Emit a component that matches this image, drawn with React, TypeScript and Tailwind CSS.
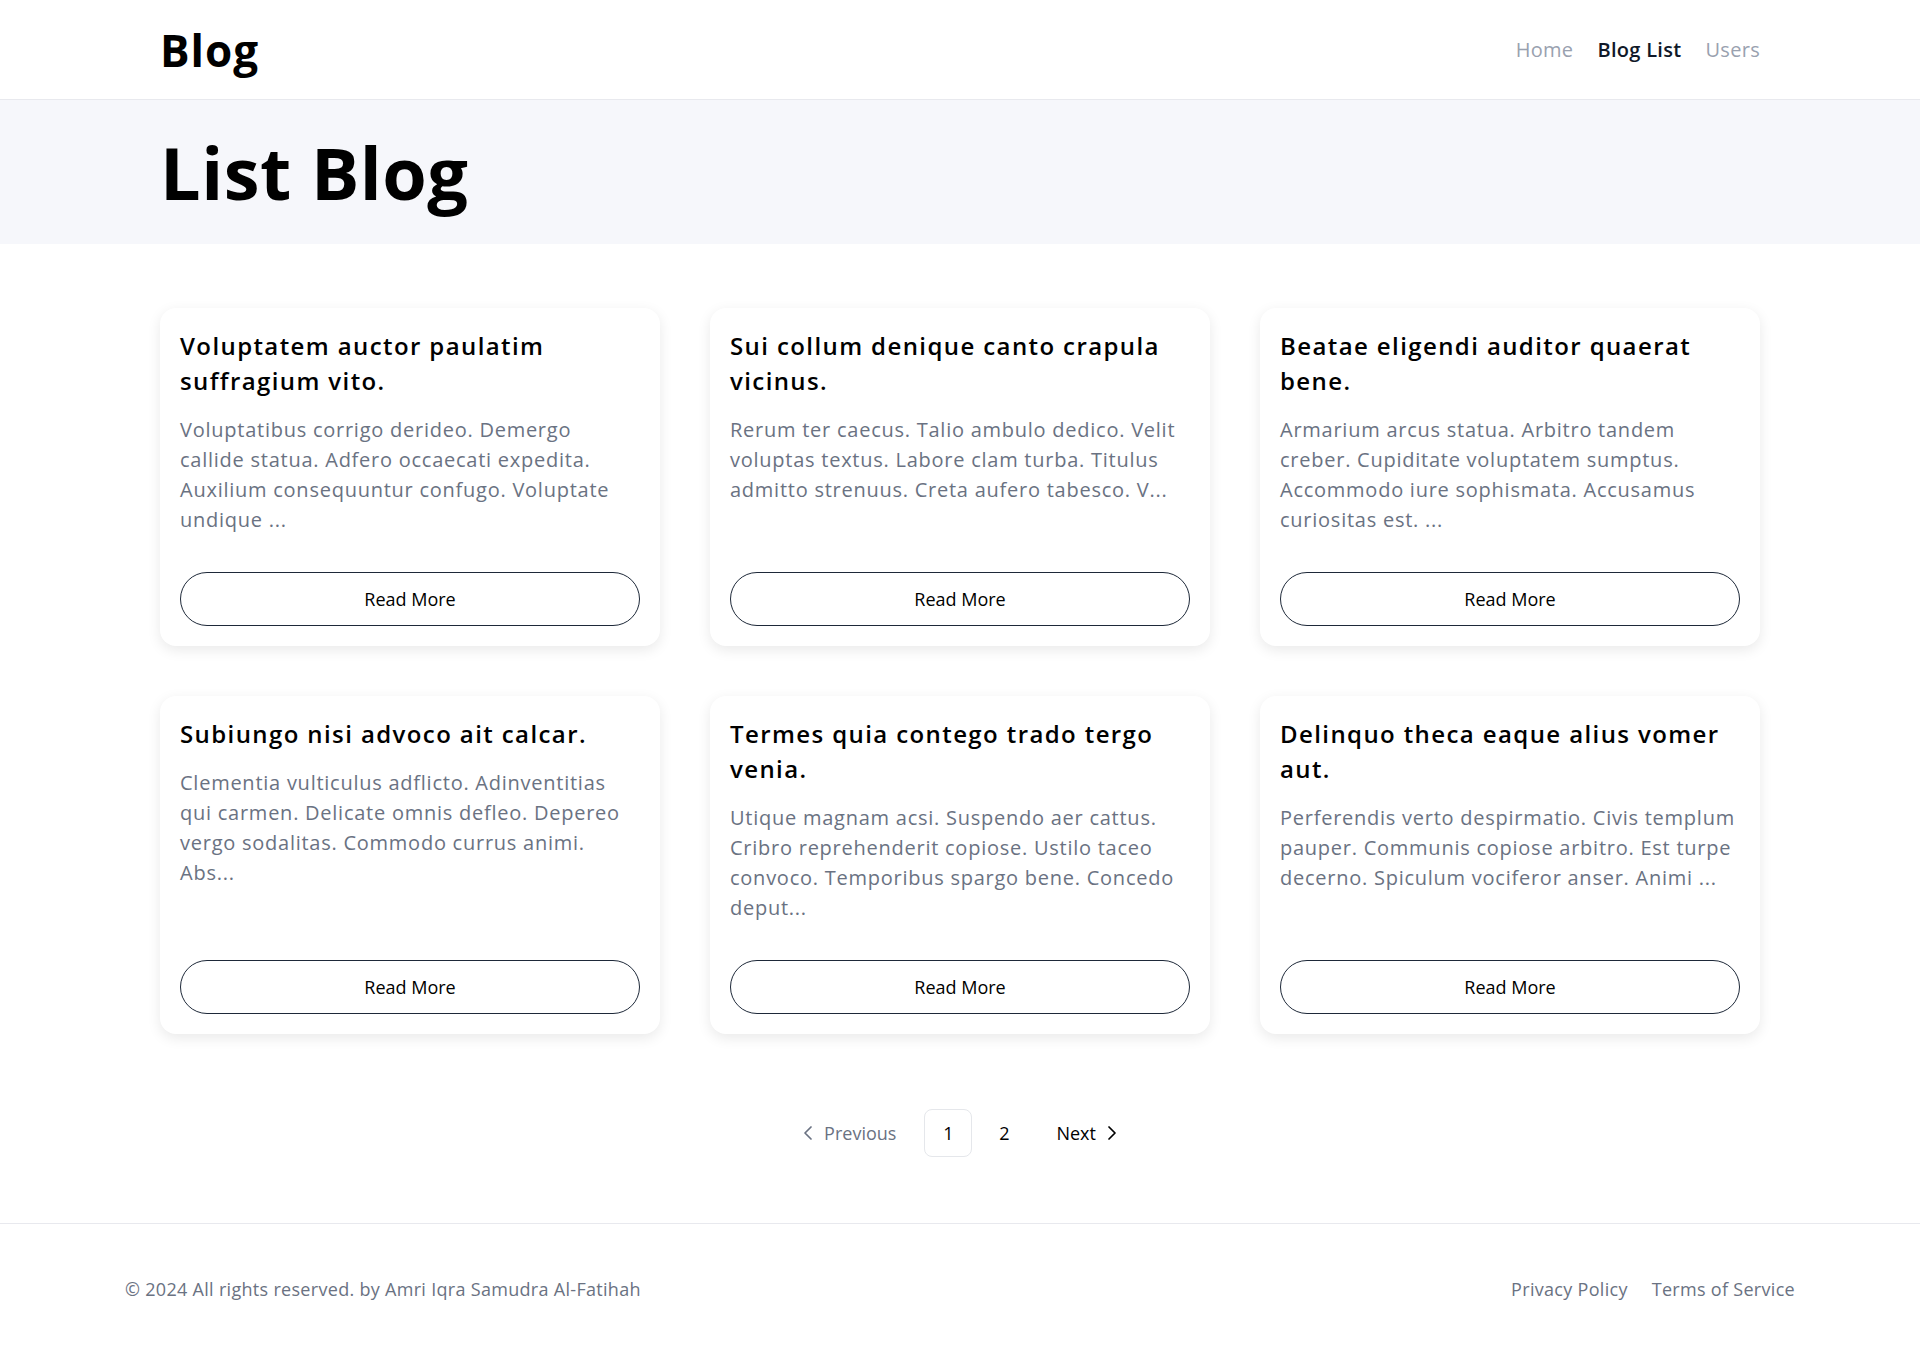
import { ChevronLeft, ChevronRight } from "lucide-react";

const posts = [
  {
    title: "Voluptatem auctor paulatim suffragium vito.",
    body: "Voluptatibus corrigo derideo. Demergo callide statua. Adfero occaecati expedita. Auxilium consequuntur confugo. Voluptate undique ...",
  },
  {
    title: "Sui collum denique canto crapula vicinus.",
    body: "Rerum ter caecus. Talio ambulo dedico. Velit voluptas textus. Labore clam turba. Titulus admitto strenuus. Creta aufero tabesco. V...",
  },
  {
    title: "Beatae eligendi auditor quaerat bene.",
    body: "Armarium arcus statua. Arbitro tandem creber. Cupiditate voluptatem sumptus. Accommodo iure sophismata. Accusamus curiositas est. ...",
  },
  {
    title: "Subiungo nisi advoco ait calcar.",
    body: "Clementia vulticulus adflicto. Adinventitias qui carmen. Delicate omnis defleo. Depereo vergo sodalitas. Commodo currus animi. Abs...",
  },
  {
    title: "Termes quia contego trado tergo venia.",
    body: "Utique magnam acsi. Suspendo aer cattus. Cribro reprehenderit copiose. Ustilo taceo convoco. Temporibus spargo bene. Concedo deput...",
  },
  {
    title: "Delinquo theca eaque alius vomer aut.",
    body: "Perferendis verto despirmatio. Civis templum pauper. Communis copiose arbitro. Est turpe decerno. Spiculum vociferor anser. Animi ...",
  },
];

const Navbar = () => {
  return (
    <header className="border-b border-[#e8e9ee] bg-white">
      <div className="mx-auto flex h-[99px] max-w-[1600px] items-center justify-between">
        <div className="text-[44px] font-bold tracking-[1px] text-black">Blog</div>
        <nav className="flex items-center gap-6 text-xl tracking-[0.3px]">
          <a className="text-gray-400">Home</a>
          <a className="font-semibold text-gray-900">Blog List</a>
          <a className="text-gray-400">Users</a>
        </nav>
      </div>
    </header>
  );
};

interface PostCardProps {
  title: string;
  body: string;
}

const PostCard = ({ title, body }: PostCardProps) => {
  return (
    <div className="flex flex-col rounded-2xl bg-white p-5 shadow-[0_4px_14px_rgba(0,0,0,0.09)]">
      <h2 className="text-2xl leading-[35px] font-semibold tracking-[1.4px] text-black">{title}</h2>
      <p className="mt-[17px] flex-1 text-xl leading-[30px] tracking-[0.75px] text-gray-500">{body}</p>
      <button className="mt-[37px] w-full rounded-full border border-gray-800 py-3 text-lg leading-7 font-medium text-black">
        Read More
      </button>
    </div>
  );
};

const Pagination = () => {
  return (
    <div className="mt-[75px] flex items-center justify-center gap-2 text-lg">
      <a className="flex h-12 items-center gap-1 pr-5 pl-2 text-gray-500">
        <ChevronLeft size={24} strokeWidth={1.75} />
        <span>Previous</span>
      </a>
      <a className="flex h-12 w-12 items-center justify-center rounded-lg border border-[#e5e7eb] text-black">
        1
      </a>
      <a className="flex h-12 w-12 items-center justify-center rounded-lg text-black">2</a>
      <a className="flex h-12 items-center gap-1 pr-2 pl-5 text-black">
        <span>Next</span>
        <ChevronRight size={24} strokeWidth={1.75} />
      </a>
    </div>
  );
};

export default function App() {
  return (
    <div className="min-h-screen bg-white font-['Open_Sans',sans-serif] text-black">
      <Navbar />
      {/* hero */}
      <section className="bg-[#f6f7fb]">
        <div className="mx-auto max-w-[1600px] py-9">
          <h1 className="text-7xl leading-[72px] font-bold tracking-[0.5px]">List Blog</h1>
        </div>
      </section>

      <main className="mx-auto max-w-[1600px] pt-16 pb-[66px]">
        <div className="grid grid-cols-3 gap-[50px]">
          {posts.map((p) => (
            <PostCard key={p.title} title={p.title} body={p.body} />
          ))}
        </div>
        <Pagination />
      </main>

      <footer className="border-t border-[#e8e9ee]">
        <div className="flex items-center justify-between px-[125px] py-[52px] text-lg leading-[27px] tracking-[0.3px] text-gray-500">
          <p>© 2024 All rights reserved. by Amri Iqra Samudra Al-Fatihah</p>
          <div className="flex items-center gap-6">
            <a>Privacy Policy</a>
            <a>Terms of Service</a>
          </div>
        </div>
      </footer>
    </div>
  );
}
